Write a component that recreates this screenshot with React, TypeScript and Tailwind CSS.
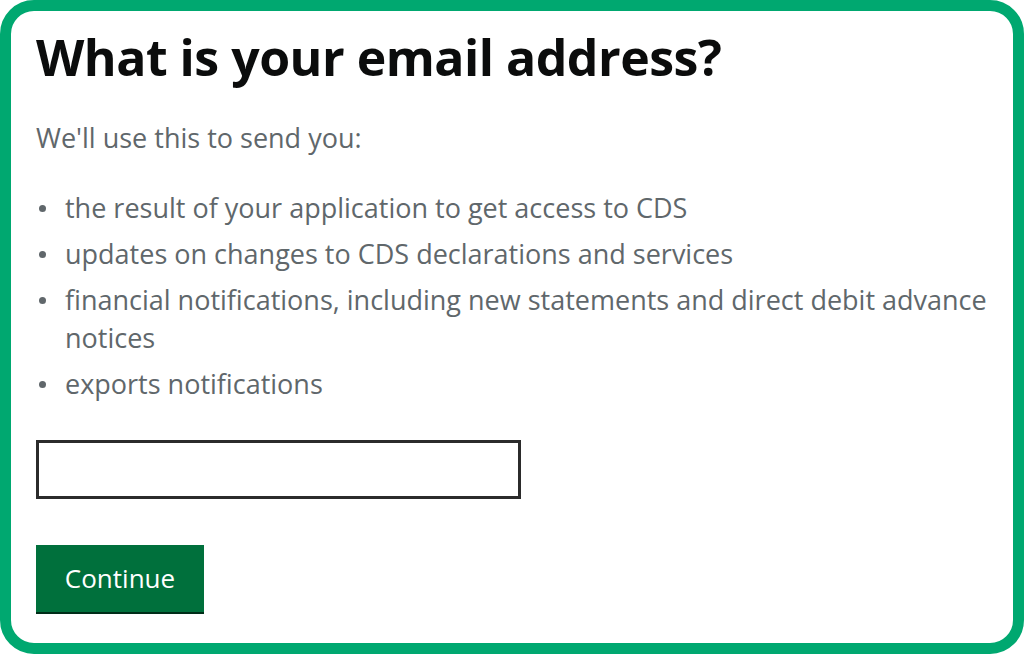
export default function App() {
  const items = [
    "the result of your application to get access to CDS",
    "updates on changes to CDS declarations and services",
    "financial notifications, including new statements and direct debit advance notices",
    "exports notifications",
  ];

  return (
    <div className="w-[1024px] h-[654px] bg-white">
      <div className="h-full border-[11px] border-[#00a870] rounded-[34px] pl-[25px] pr-[22px] pt-[14px] font-['Open_Sans',sans-serif]">
        {/* Heading */}
        <h1 className="text-[50px] leading-[64px] font-bold text-[#0b0c0c] tracking-[-0.5px]">
          What is your email address?
        </h1>

        <p className="mt-[31px] text-[27px] leading-[36px] text-[#60676b]">
          We'll use this to send you:
        </p>

        {/* List */}
        <ul className="mt-[33px] flex flex-col gap-[8px] text-[27px] leading-[38px] text-[#60676b]">
          {items.map((item) => (
            <li key={item} className="flex">
              <span className="w-[29px] shrink-0 flex items-start pt-[16px] pl-[3px]">
                <span className="block w-[7px] h-[7px] rounded-full bg-[#60676b]" />
              </span>
              <span>{item}</span>
            </li>
          ))}
        </ul>

        {/* Input */}
        <input
          type="email"
          className="mt-[37px] block w-[485px] h-[59px] border-[3px] border-[#2b2b2b] bg-white outline-none"
        />

        {/* Button */}
        <button className="mt-[46px] w-[168px] h-[67px] bg-[#00703c] text-white text-[26px] shadow-[0_2px_0_#002d18]">
          Continue
        </button>
      </div>
    </div>
  );
}
